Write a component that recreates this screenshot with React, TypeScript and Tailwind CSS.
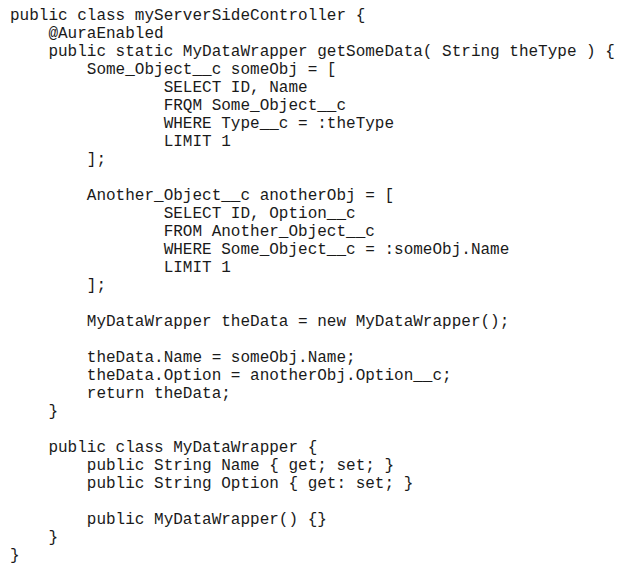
const code = `public class myServerSideController {
    @AuraEnabled
    public static MyDataWrapper getSomeData( String theType ) {
        Some_Object__c someObj = [
                SELECT ID, Name
                FRQM Some_Object__c
                WHERE Type__c = :theType
                LIMIT 1
        ];

        Another_Object__c anotherObj = [
                SELECT ID, Option__c
                FROM Another_Object__c
                WHERE Some_Object__c = :someObj.Name
                LIMIT 1
        ];

        MyDataWrapper theData = new MyDataWrapper();

        theData.Name = someObj.Name;
        theData.Option = anotherObj.Option__c;
        return theData;
    }

    public class MyDataWrapper {
        public String Name { get; set; }
        public String Option { get: set; }

        public MyDataWrapper() {}
    }
}`;

export default function App() {
  return (
    <div className="w-[623px] h-[573px] bg-white overflow-hidden">
      <pre className="m-0 pl-[10px] pt-[7px] font-['Courier_New','Nimbus_Mono_PS','FreeMono','Liberation_Mono',monospace] text-[16px] leading-[18px] text-[#1a1a1a] whitespace-pre">
        {code}
      </pre>
    </div>
  );
}
